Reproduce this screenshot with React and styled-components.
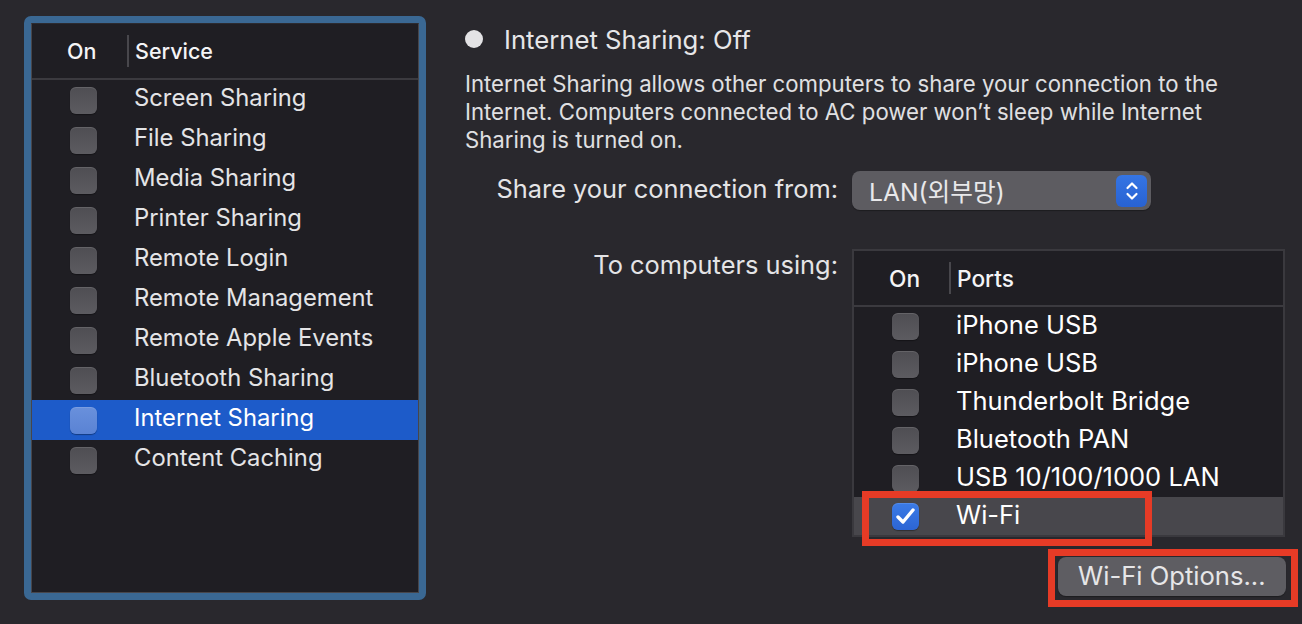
import styled, { createGlobalStyle } from "styled-components"

const GlobalStyle = createGlobalStyle`
    html, body {
        margin: 0;
        padding: 0;
        background: #29282d;
    }
    body {
        font-family: Inter, "Noto Sans", "Noto Sans CJK KR", sans-serif;
        color: #e2e2e4;
        -webkit-font-smoothing: antialiased;
    }
`

const Page = styled.div`
    width: 1302px;
    height: 624px;
    display: flex;
    align-items: flex-start;
    gap: 39px;
    padding: 16px 0 0 24px;
    box-sizing: border-box;
    overflow: hidden;
`

const FocusRing = styled.div`
    width: 402px;
    height: 584px;
    box-sizing: border-box;
    border: 7px solid #3a6893;
    border-radius: 7px;
    background: #1f1e23;
    flex-shrink: 0;
`

const List = styled.div`
    height: 100%;
    box-sizing: border-box;
    border: 1px solid #47464b;
    border-top-color: #2c2b30;
    display: flex;
    flex-direction: column;
`

const HeaderRow = styled.div`
    height: ${p => p.$h}px;
    display: flex;
    align-items: center;
    border-bottom: 2px solid #3b3a3f;
    box-sizing: border-box;
    flex-shrink: 0;
`

const HeadCell = styled.div`
    width: ${p => p.$w ? `${p.$w}px` : "auto"};
    padding-left: ${p => p.$pl || 0}px;
    box-sizing: border-box;
    font-size: ${p => p.$fs || 21.5}px;
    font-weight: 500;
    color: #f4f4f6;
    display: flex;
    align-items: center;
    height: 32px;
    border-right: ${p => p.$sep ? "2px solid #48474c" : "none"};
`

const Row = styled.div`
    height: ${p => p.$h}px;
    display: flex;
    align-items: center;
    flex-shrink: 0;
    background: ${p => p.$selected ? "#1d5bc9" : p.$hover ? "#48474c" : "transparent"};
`

const CheckCell = styled.div`
    width: ${p => p.$w}px;
    padding-left: ${p => p.$pl}px;
    box-sizing: border-box;
    display: flex;
    align-items: center;
`

const Check = styled.div`
    width: 27px;
    height: 27px;
    border-radius: 6px;
    box-sizing: border-box;
    display: flex;
    align-items: center;
    justify-content: center;
    background: ${p => p.$checked
        ? "linear-gradient(#3b7be6, #2c65d4)"
        : p.$onBlue
            ? "linear-gradient(#6990dc, #5a83d4)"
            : "linear-gradient(#4f4e53, #5c5b60)"};
    box-shadow: inset 0 1px 0 rgba(255,255,255,0.12), 0 1px 1px rgba(0,0,0,0.35);
`

const ItemLabel = styled.div`
    font-size: ${p => p.$fs}px;
    color: ${p => p.$bright ? "#ffffff" : "#e4e4e6"};
    white-space: nowrap;
    margin-top: ${p => p.$nudge || 0}px;
`

const Right = styled.div`
    width: 822px;
    display: flex;
    flex-direction: column;
    padding-top: 8px;
`

const StatusLine = styled.div`
    display: flex;
    align-items: center;
    gap: 21px;
    height: 30px;
`

const Radio = styled.div`
    width: 18px;
    height: 18px;
    border-radius: 50%;
    background: #e3e3e5;
    flex-shrink: 0;
`

const Title = styled.div`
    font-size: 25.7px;
    color: #e6e6e8;
`

const Description = styled.p`
    margin: 16px 0 0;
    font-size: 22.2px;
    line-height: 28px;
    color: #e0e0e2;
    white-space: nowrap;
`

const Form = styled.div`
    margin-top: 17px;
    display: grid;
    grid-template-columns: 373px 434px;
    column-gap: 14px;
    row-gap: 39px;
`

const FieldLabel = styled.div`
    text-align: right;
    font-size: 25.4px;
    color: #e4e4e6;
    line-height: ${p => p.$lh || 36}px;
    white-space: nowrap;
`

const Popup = styled.div`
    width: 299px;
    height: 39px;
    border-radius: 8px;
    background: #5d5c61;
    box-shadow: 0 1px 1px rgba(0,0,0,0.3);
    display: flex;
    align-items: center;
    justify-content: space-between;
    padding: 0 4px 0 17px;
    box-sizing: border-box;
`

const PopupText = styled.span`
    font-size: 24.7px;
    color: #e8e8ea;
    margin-top: -2px;
`

const Stepper = styled.div`
    width: 31px;
    height: 32px;
    border-radius: 6px;
    background: linear-gradient(#3575e4, #2862d2);
    display: flex;
    align-items: center;
    justify-content: center;
`

const PortsTable = styled.div`
    position: relative;
    width: 433px;
    box-sizing: border-box;
    border: 2px solid #3a393e;
    background: #1f1e23;
    display: flex;
    flex-direction: column;
`

const Annotation = styled.div`
    position: absolute;
    border: 7px solid #e63b26;
    box-sizing: border-box;
    pointer-events: none;
`

const ButtonRow = styled.div`
    grid-column: 2;
    display: flex;
    justify-content: flex-end;
    margin-top: -19px;
`

const ButtonWrap = styled.div`
    position: relative;
`

const Button = styled.button`
    width: 228px;
    height: 39px;
    border: none;
    border-radius: 8px;
    background: #5e5d62;
    box-shadow: 0 1px 1px rgba(0,0,0,0.3);
    color: #e6e6e8;
    font-family: inherit;
    font-size: 25.6px;
    text-align: left;
    padding: 0 0 2px 20px;
`

const services = [
    "Screen Sharing",
    "File Sharing",
    "Media Sharing",
    "Printer Sharing",
    "Remote Login",
    "Remote Management",
    "Remote Apple Events",
    "Bluetooth Sharing",
    "Internet Sharing",
    "Content Caching",
]

const ports = [
    { name: "iPhone USB" },
    { name: "iPhone USB" },
    { name: "Thunderbolt Bridge" },
    { name: "Bluetooth PAN" },
    { name: "USB 10/100/1000 LAN" },
    { name: "Wi-Fi", on: true },
]

function CheckMark() {
    return (
        <svg width="21" height="19" viewBox="0 0 21 19">
            <path d="M3 10 L8 15 L18 3" fill="none" stroke="#fff" strokeWidth="3.4" strokeLinecap="round" strokeLinejoin="round" />
        </svg>
    )
}

function Chevrons() {
    return (
        <svg width="16" height="24" viewBox="0 0 16 24">
            <path d="M3.5 9 L8 4.5 L12.5 9" fill="none" stroke="#fff" strokeWidth="2.2" strokeLinecap="round" strokeLinejoin="round" />
            <path d="M3.5 15 L8 19.5 L12.5 15" fill="none" stroke="#fff" strokeWidth="2.2" strokeLinecap="round" strokeLinejoin="round" />
        </svg>
    )
}

export default function App() {
    return (
        <>
            <GlobalStyle />
            <Page>
                <FocusRing>
                    <List>
                        <HeaderRow $h={56}>
                            <HeadCell $w={97} $pl={35} $sep>On</HeadCell>
                            <HeadCell $pl={6}>Service</HeadCell>
                        </HeaderRow>
                        {services.map(s => {
                            const sel = s === "Internet Sharing"
                            return (
                                <Row key={s} $h={40} $selected={sel}>
                                    <CheckCell $w={102} $pl={38}>
                                        <Check $onBlue={sel} />
                                    </CheckCell>
                                    <ItemLabel $fs={23.8} $nudge={-5} $bright={sel}>{s}</ItemLabel>
                                </Row>
                            )
                        })}
                    </List>
                </FocusRing>

                <Right>
                    <StatusLine>
                        <Radio />
                        <Title>Internet Sharing: Off</Title>
                    </StatusLine>
                    <Description>
                        Internet Sharing allows other computers to share your connection to the<br />
                        Internet. Computers connected to AC power won’t sleep while Internet<br />
                        Sharing is turned on.
                    </Description>

                    <Form>
                        <FieldLabel>Share your connection from:</FieldLabel>
                        <div>
                            <Popup>
                                <PopupText>LAN(외부망)</PopupText>
                                <Stepper><Chevrons /></Stepper>
                            </Popup>
                        </div>

                        <FieldLabel $lh={32}>To computers using:</FieldLabel>
                        <PortsTable>
                            <HeaderRow $h={56}>
                                <HeadCell $w={97} $pl={35} $sep $fs={22.7}>On</HeadCell>
                                <HeadCell $pl={6} $fs={22.7}>Ports</HeadCell>
                            </HeaderRow>
                            {ports.map((p, i) => (
                                <Row key={i} $h={38} $hover={p.on}>
                                    <CheckCell $w={102} $pl={38}>
                                        <Check $checked={p.on}>{p.on && <CheckMark />}</Check>
                                    </CheckCell>
                                    <ItemLabel $fs={25.5} $nudge={-3} $bright>{p.name}</ItemLabel>
                                </Row>
                            ))}
                            <Annotation style={{ left: 8, top: 240, width: 290, height: 55 }} />
                        </PortsTable>

                        <ButtonRow>
                            <ButtonWrap>
                                <Button>Wi-Fi Options...</Button>
                                <Annotation style={{ left: -10, top: -8, width: 250, height: 58 }} />
                            </ButtonWrap>
                        </ButtonRow>
                    </Form>
                </Right>
            </Page>
        </>
    )
}
